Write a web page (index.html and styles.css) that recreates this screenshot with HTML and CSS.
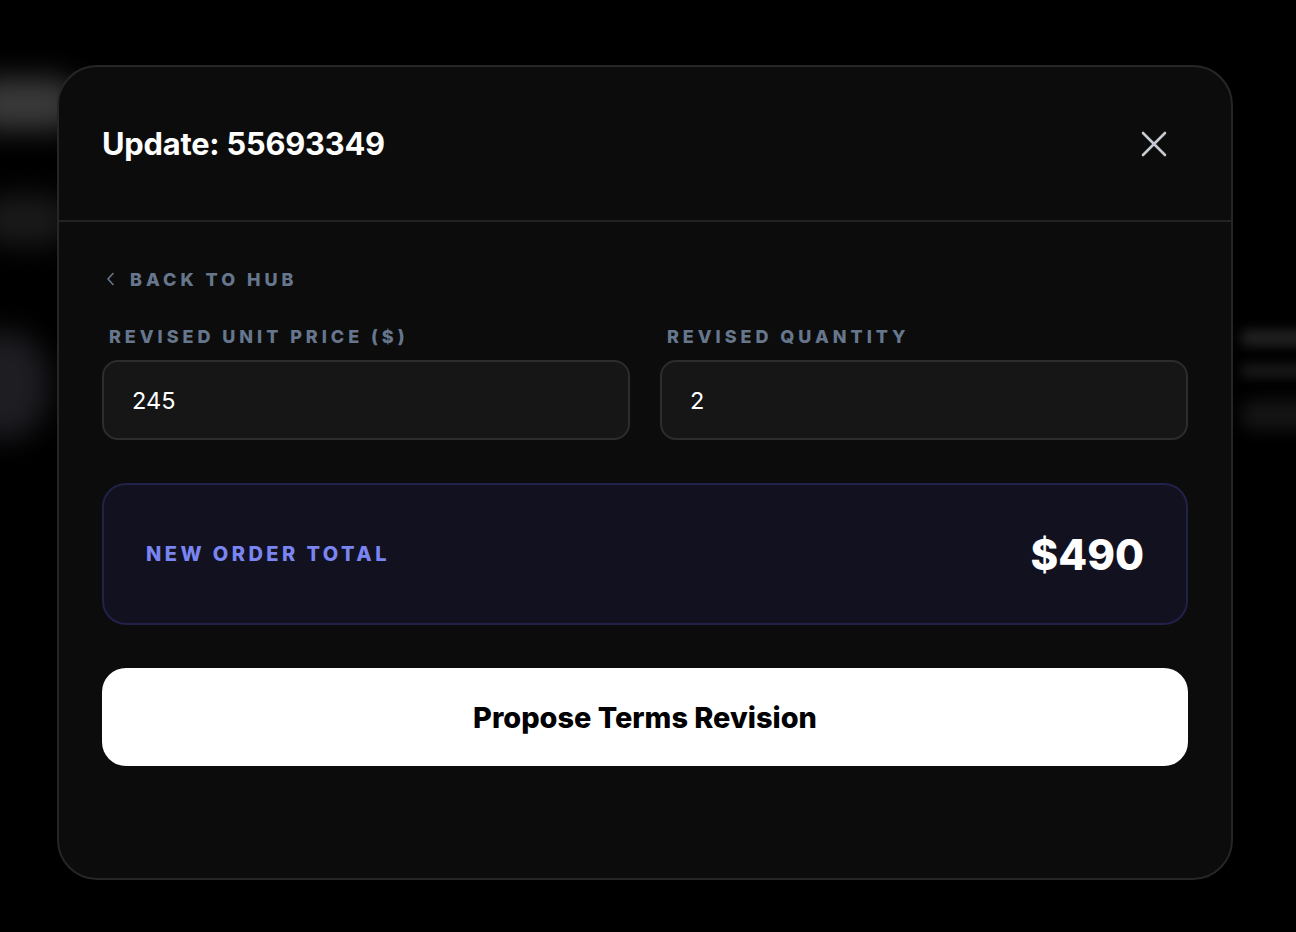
FILE: index.html
```html
<!DOCTYPE html>
<html lang="en">
<head>
<meta charset="utf-8">
<title>Update: 55693349</title>
<link rel="stylesheet" href="styles.css">
</head>
<body>
<div class="backdrop" aria-hidden="true">
  <div class="blur b1"></div>
  <div class="blur b2"></div>
  <div class="blur b3"></div>
  <div class="blur b4"></div>
  <div class="blur b5"></div>
  <div class="blur b6"></div>
</div>
<div class="modal">
  <header class="modal-header">
    <h1 class="title">Update: 55693349</h1>
    <button class="close" aria-label="Close">
      <svg width="28" height="28" viewBox="0 0 28 28" fill="none" stroke="currentColor" stroke-width="2.6" stroke-linecap="round"><path d="M3 3L25 25M25 3L3 25"/></svg>
    </button>
  </header>
  <div class="modal-body">
    <a class="back" href="#">
      <svg width="10" height="14" viewBox="0 0 10 14" fill="none" stroke="currentColor" stroke-width="1.6" stroke-linecap="round" stroke-linejoin="round"><path d="M7 1.5L2 7l5 5.5"/></svg>
      <span>BACK TO HUB</span>
    </a>
    <div class="fields">
      <label class="field">
        <span class="label">REVISED UNIT PRICE ($)</span>
        <input class="input" type="text" value="245">
      </label>
      <label class="field">
        <span class="label">REVISED QUANTITY</span>
        <input class="input" type="text" value="2">
      </label>
    </div>
    <div class="total">
      <span class="total-label">NEW ORDER TOTAL</span>
      <span class="total-value">$490</span>
    </div>
    <button class="submit">Propose Terms Revision</button>
  </div>
</div>
</body>
</html>
```
FILE: styles.css
```css
* { box-sizing: border-box; }
html, body { margin: 0; padding: 0; background: #000; }
body {
  width: 1296px;
  height: 932px;
  overflow: hidden;
  position: relative;
  font-family: Inter, "Liberation Sans", sans-serif;
  color: #fff;
  padding: 65px 0 0 57px;
}
.backdrop { position: absolute; inset: 0; z-index: 0; }
.blur { position: absolute; border-radius: 40px; filter: blur(14px); }
.b1 { left: -30px; top: 78px; width: 110px; height: 52px; background: #3a3a3a; }
.b2 { left: -20px; top: 195px; width: 90px; height: 50px; background: #1a1a1a; }
.b3 { left: -40px; top: 330px; width: 90px; height: 110px; background: #1d1d22; border-radius: 50%; }
.b4 { left: 1240px; top: 330px; width: 90px; height: 16px; background: #222; filter: blur(6px); }
.b5 { left: 1240px; top: 365px; width: 90px; height: 12px; background: #1c1c1c; filter: blur(6px); }
.b6 { left: 1240px; top: 400px; width: 90px; height: 30px; background: #141414; filter: blur(8px); }

.modal {
  position: relative;
  z-index: 1;
  width: 1176px;
  height: 815px;
  background: #0c0c0c;
  border: 2px solid #262626;
  border-radius: 40px;
  display: flex;
  flex-direction: column;
}
.modal-header {
  height: 155px;
  border-bottom: 2px solid #232323;
  display: flex;
  align-items: center;
  justify-content: space-between;
  padding: 0 63px 0 43px;
}
.title {
  margin: 0;
  font-size: 30.8px;
  font-weight: 700;
  letter-spacing: -0.2px;
}
.close {
  background: none;
  border: 0;
  padding: 0;
  color: #c6cad1;
  display: flex;
  cursor: pointer;
}
.modal-body {
  padding: 46px 43px 0 43px;
  display: flex;
  flex-direction: column;
}
.back {
  display: flex;
  align-items: center;
  gap: 14px;
  color: #66778d;
  text-decoration: none;
  font-size: 18px;
  font-weight: 800;
  letter-spacing: 4px;
  height: 22px;
  padding-left: 4px;
}
.fields {
  margin-top: 36px;
  display: grid;
  grid-template-columns: 1fr 1fr;
  gap: 30px;
}
.field { display: flex; flex-direction: column; }
.label {
  color: #66778d;
  font-size: 18px;
  font-weight: 800;
  letter-spacing: 3.95px;
  height: 22px;
  line-height: 22px;
  padding-left: 7px;
  margin-bottom: 12px;
}
.input {
  height: 80px;
  width: 100%;
  background: #161616;
  border: 2px solid #2d2d2d;
  border-radius: 16px;
  color: #fff;
  font-family: Inter, "Liberation Sans", sans-serif;
  font-size: 23.5px;
  font-weight: 400;
  padding: 0 28px;
  outline: none;
}
.total {
  margin-top: 43px;
  height: 142px;
  background: #11111f;
  border: 2px solid #22214a;
  border-radius: 24px;
  display: flex;
  align-items: center;
  justify-content: space-between;
  padding: 0 42px;
}
.total-label {
  color: #7a85f1;
  font-size: 20px;
  font-weight: 800;
  letter-spacing: 3.45px;
}
.total-value {
  font-size: 42px;
  font-weight: 800;
  letter-spacing: 0;
}
.submit {
  margin-top: 43px;
  height: 98px;
  width: 100%;
  border: 0;
  border-radius: 24px;
  background: #fff;
  color: #000;
  font-family: Inter, "Liberation Sans", sans-serif;
  font-size: 28.9px;
  font-weight: 800;
  cursor: pointer;
}
```
